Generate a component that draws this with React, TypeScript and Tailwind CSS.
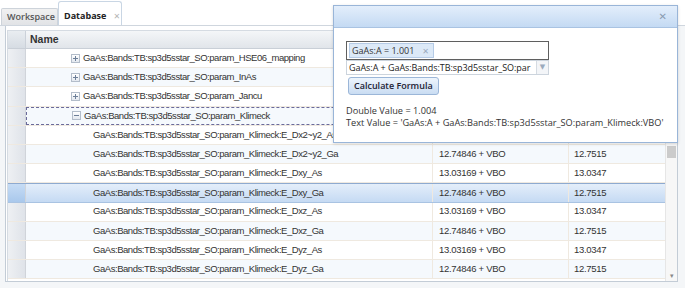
const parents = [
  { name: "GaAs:Bands:TB:sp3d5sstar_SO:param_HSE06_mapping", open: false },
  { name: "GaAs:Bands:TB:sp3d5sstar_SO:param_InAs", open: false },
  { name: "GaAs:Bands:TB:sp3d5sstar_SO:param_Jancu", open: false },
  { name: "GaAs:Bands:TB:sp3d5sstar_SO:param_Klimeck", open: true },
]

const children = [
  { name: "E_Dx2~y2_As", expr: "13.03169 + VBO", value: "13.0347" },
  { name: "E_Dx2~y2_Ga", expr: "12.74846 + VBO", value: "12.7515" },
  { name: "E_Dxy_As", expr: "13.03169 + VBO", value: "13.0347" },
  { name: "E_Dxy_Ga", expr: "12.74846 + VBO", value: "12.7515" },
  { name: "E_Dxz_As", expr: "13.03169 + VBO", value: "13.0347" },
  { name: "E_Dxz_Ga", expr: "12.74846 + VBO", value: "12.7515" },
  { name: "E_Dyz_As", expr: "13.03169 + VBO", value: "13.0347" },
  { name: "E_Dyz_Ga", expr: "12.74846 + VBO", value: "12.7515" },
]

function TreeToggle({ open }: { open: boolean }) {
  return (
    <span className="w-[9px] h-[9px] border border-[#b3bdca] bg-gradient-to-b from-white to-[#e3e8ef] flex items-center justify-center mr-[3px] relative">
      <span className="absolute w-[5px] h-px bg-[#6d7f98]" />
      {!open && <span className="absolute w-px h-[5px] bg-[#6d7f98]" />}
    </span>
  )
}

function RowNumber() {
  return <div className="w-[18px] shrink-0 h-full bg-gradient-to-r from-[#eef0f3] to-[#dfe3e9] border-r border-[#d0d4da]" />
}

export default function App() {
  return (
    <div className="w-[685px] h-[288px] bg-white relative overflow-hidden text-[#333] font-['Liberation_Sans',Arial,sans-serif]">
      {/* Tabs */}
      <div className="h-[25px] flex items-end pl-px bg-white font-['Open_Sans','DejaVu_Sans',sans-serif]">
        <div className="h-[17px] w-[57px] pl-[5px] flex items-center border border-b-0 border-[#cdd3da] bg-gradient-to-b from-[#f1f1f1] to-[#e1e3e6] rounded-t-[2px] text-[9px] font-semibold text-[#555]">
          Workspace
        </div>
        <div className="h-[24px] w-[64px] pl-[5px] pt-[5px] flex items-center border border-b-0 border-[#c9d6e4] bg-white rounded-t-[3px] text-[9px] font-bold text-[#222]">
          Database
          <span className="ml-[7px] text-[#b5b5b5] text-[8px] font-bold">✕</span>
        </div>
      </div>

      {/* Panel */}
      <div className="h-[263px] border-t border-[#cfd6de] bg-[#f4f6f8] pl-[5px] pr-[7px] pb-[6px]">
        <div className="h-full bg-white border-x border-b border-[#c3ccd6] pl-[1px] pt-[4px]">
          <div className="h-full border-l border-t border-[#d5dbe2] flex flex-col">
            {/* Header */}
            <div className="h-[18px] flex shrink-0 bg-gradient-to-b from-[#f4f6f8] to-[#e1e5ea] border-b border-[#c9cfd7]">
              <div className="w-[18px] border-r border-[#cbd1d9] bg-gradient-to-b from-[#e9edf1] to-[#d6dce3]" />
              <div className="flex-1 flex items-center pl-[4px] text-[10.5px] font-bold text-[#333]">Name</div>
            </div>

            <div className="flex flex-1 min-h-0">
              <div className="flex-1 min-w-0">
                {parents.map((p, i) => (
                  <div key={p.name} className={`h-[19.2px] flex border-b border-[#efe9e0] ${i % 2 === 1 ? "bg-[#f5f9fd]" : "bg-white"}`}>
                    <RowNumber />
                    <div className={`flex-1 flex items-center pl-[45px] text-[9.5px] tracking-[-0.45px] text-[#333] ${p.open ? "border border-dashed border-[#6a6a9a]" : ""}`}>
                      <TreeToggle open={p.open} />
                      {p.name}
                    </div>
                  </div>
                ))}
                {children.map((c, i) => {
                  const selected = c.name === "E_Dxy_Ga"
                  const alt = i % 2 === 1
                  return (
                    <div
                      key={c.name}
                      className={`h-[19.2px] flex border-b ${
                        selected
                          ? "bg-gradient-to-b from-[#e4eefa] to-[#c5daf3] border-[#a9c3e2] border-t border-t-[#8eaad0]"
                          : alt
                          ? "bg-[#f5f9fd] border-[#efe9e0]"
                          : "bg-white border-[#efe9e0]"
                      }`}
                    >
                      <div className={`w-[18px] shrink-0 border-r border-[#d0d4da] ${selected ? "bg-gradient-to-b from-[#c6dcf5] to-[#a9c8ec]" : "bg-gradient-to-r from-[#eef0f3] to-[#dfe3e9]"}`} />
                      <div className="w-[407px] flex items-center pl-[67px] text-[9.5px] tracking-[-0.45px] text-[#333] whitespace-nowrap overflow-hidden border-r border-[#efe9e0]">
                        GaAs:Bands:TB:sp3d5sstar_SO:param_Klimeck:{c.name}
                      </div>
                      <div className="w-[136px] flex items-center pl-[6px] text-[9.5px] tracking-[-0.3px] text-[#333] border-r border-[#efe9e0]">{c.expr}</div>
                      <div className="flex-1 flex items-center pl-[5px] text-[9.5px] tracking-[-0.3px] text-[#333]">{c.value}</div>
                    </div>
                  )
                })}
              </div>
              {/* Scrollbar */}
              <div className="w-[12px] shrink-0 bg-[#f7f7f7] border-l border-[#e6e6e6] flex flex-col">
                <div className="h-[97px]" />
                <div className="h-[12px] mx-[1px] bg-[#cbcbcb]" />
                <div className="flex-1" />
                <div className="h-[10px] flex items-center justify-center text-[7px] text-[#888]">▾</div>
              </div>
            </div>
          </div>
        </div>
      </div>

      {/* Formula dialog */}
      <div className="absolute left-[333px] top-[5px] w-[345px] h-[138px] border border-[#99b5d8] bg-white shadow-[0_1px_3px_rgba(0,0,0,0.15)] font-['Open_Sans','DejaVu_Sans',sans-serif]">
        <div className="h-[22px] bg-gradient-to-b from-[#e3eefb] to-[#c4daf3] border-b border-[#a9c3e2] flex items-center justify-end pr-[10px]">
          <span className="text-[10px] font-bold text-[#8a9bb0]">✕</span>
        </div>
        <div className="pl-[12px] pt-[13px]">
          <div className="w-[203px] h-[19px] border border-[#5f5f5f] flex items-center px-[2px] bg-white">
            <span className="h-[15px] flex items-center bg-[#dce9f7] border border-[#b5cbe6] px-[2px] text-[9px] text-[#333]">
              GaAs:A = 1.001
              <span className="ml-[8px] mr-[2px] text-[8px] text-[#9aaabd]">✕</span>
            </span>
          </div>
          <div className="w-[203px] h-[15px] border border-[#ccd4dd] flex bg-white">
            <div className="flex-1 flex items-center pl-[2px] text-[9px] tracking-[-0.05px] text-[#222] overflow-hidden whitespace-nowrap">
              GaAs:A + GaAs:Bands:TB:sp3d5sstar_SO:par
            </div>
            <div className="w-[12px] border-l border-[#d5dbe2] bg-[#f3f5f8] flex items-center justify-center text-[7px] text-[#9aaabd]">▼</div>
          </div>
          <button className="mt-[2px] ml-[2px] h-[18px] px-[5px] flex items-center border border-[#9bb6d8] rounded-[3px] bg-gradient-to-b from-[#eef5fd] to-[#c9dcf2] text-[9px] font-semibold text-[#223]">
            Calculate Formula
          </button>
          <div className="mt-[10px] text-[9.2px] leading-[12px] text-[#333] whitespace-nowrap">
            <div>Double Value = 1.004</div>
            <div>Text Value = 'GaAs:A + GaAs:Bands:TB:sp3d5sstar_SO:param_Klimeck:VBO'</div>
          </div>
        </div>
      </div>
    </div>
  )
}
